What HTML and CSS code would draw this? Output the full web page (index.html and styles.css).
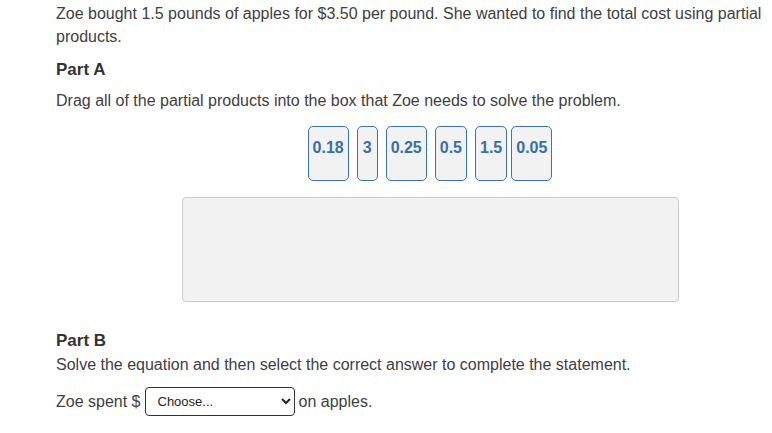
FILE: index.html
```html
<!DOCTYPE html>
<html lang="en">
<head>
<meta charset="utf-8">
<title>Partial products</title>
<link rel="stylesheet" href="styles.css">
</head>
<body>
<main class="page">
  <p class="intro">Zoe bought 1.5 pounds of apples for $3.50 per pound. She wanted to find the total cost using partial products.</p>

  <section class="part part-a">
    <h3 class="part-title">Part A</h3>
    <p class="prompt">Drag all of the partial products into the box that Zoe needs to solve the problem.</p>
    <div class="tiles">
      <div class="tile">0.18</div>
      <div class="tile tile--narrow">3</div>
      <div class="tile">0.25</div>
      <div class="tile">0.5</div>
      <div class="tile">1.5</div>
      <div class="tile tile--tight">0.05</div>
    </div>
    <div class="dropzone"></div>
  </section>

  <section class="part part-b">
    <h3 class="part-title part-title--b">Part B</h3>
    <p class="prompt prompt--b">Solve the equation and then select the correct answer to complete the statement.</p>
    <div class="answer-row">
      <span>Zoe spent $</span>
      <select class="choice">
        <option>Choose...</option>
        <option>5.25</option>
        <option>4.75</option>
        <option>5.00</option>
      </select>
      <span>on apples.</span>
    </div>
  </section>
</main>
</body>
</html>
```

FILE: styles.css
```css
html, body {
  margin: 0;
  padding: 0;
  background: #ffffff;
  overflow: hidden;
}

body {
  font-family: "Liberation Sans", Arial, sans-serif;
  font-size: 16px;
  color: #404040;
}

.page {
  width: 748px;
  padding: 2px 0 0 56px;
}

.intro {
  margin: 0;
  line-height: 23px;
}

.part-title {
  margin: 10px 0 0;
  font-size: 17px;
  font-weight: bold;
  line-height: 23px;
  color: #333333;
}

.prompt {
  margin: 8px 0 0;
  line-height: 23px;
}

.tiles {
  display: flex;
  justify-content: center;
  gap: 8px;
  margin-top: 14px;
}

.tile {
  box-sizing: border-box;
  height: 55px;
  padding: 11px 4px 0;
  border: 1px solid #3d74aa;
  border-radius: 5px;
  background: #f2f2f2;
  color: #3570a8;
  font-size: 16px;
  font-weight: bold;
  line-height: 20px;
}

.tile--narrow {
  padding-left: 5px;
  padding-right: 5px;
}

.tile--tight {
  margin-left: -4px;
}

.dropzone {
  box-sizing: border-box;
  width: 497px;
  height: 105px;
  margin: 16px auto 0;
  border: 1px solid #cccccc;
  border-radius: 4px;
  background: #f2f2f2;
}

.part-title--b {
  margin-top: 27px;
}

.prompt--b {
  margin-top: 1px;
}

.answer-row {
  display: flex;
  align-items: center;
  gap: 4px;
  margin-top: 11px;
}

.choice {
  box-sizing: border-box;
  width: 150px;
  height: 29px;
  padding: 0 4px 0 8px;
  border: 1px solid #333333;
  border-radius: 4px;
  background: #ffffff;
  color: #222222;
  font-family: "Liberation Sans", Arial, sans-serif;
  font-size: 13px;
}
```
